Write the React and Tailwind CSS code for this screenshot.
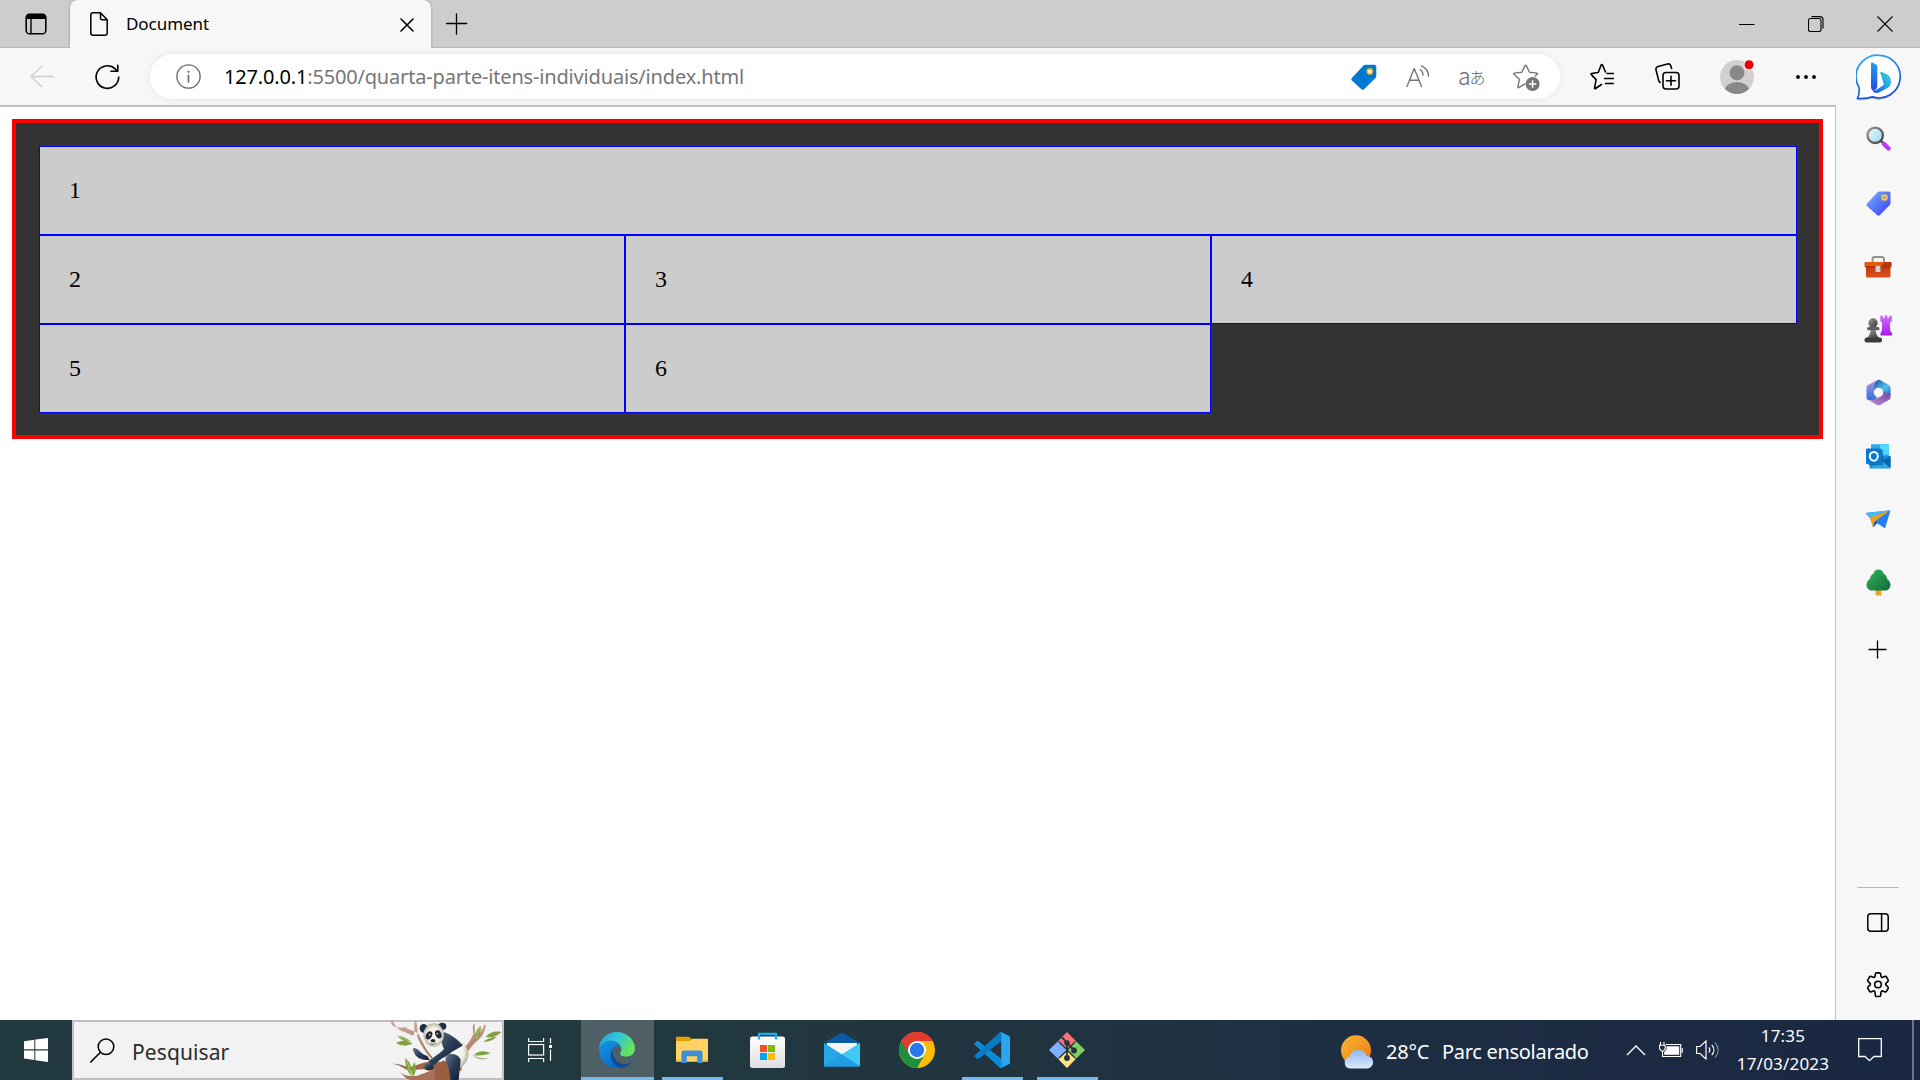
import React from "react";

const stroke = { fill: "none", stroke: "currentColor", strokeLinecap: "round", strokeLinejoin: "round" };

/* ---------- Tab strip ---------- */

function TabStrip() {
  return (
    <div className="flex h-12 shrink-0 bg-[#cdcdcd] text-black">
      <div className="flex w-[70px] items-center border-b border-[#b9b9b9] pl-[25px]">
        <svg className="h-[22px] w-[22px]" viewBox="0 0 22 22">
          <rect x="1.2" y="1.2" width="19.6" height="19.6" rx="3.4" {...stroke} strokeWidth="1.6" />
          <path d="M1 6V4.500A3.500 3.500 0 0 1 4.500 1h13A3.500 3.500 0 0 1 21 4.500V6z" fill="#000" />
          <path d="M6 6v14.500" {...stroke} strokeWidth="1.400" />
        </svg>
      </div>
      <div className="flex w-[361px] items-center rounded-t-lg bg-[#f7f7f7] pl-5 shadow-[0_0_3px_rgba(0,0,0,0.28)] [clip-path:inset(-3px_-3px_0_-3px)]">
        <svg className="h-6 w-[18px]" viewBox="0 0 18 24">
          <path d="M3 .8h7.500l6.700 7V21a2.200 2.200 0 0 1-2.200 2.200H3A2.200 2.200 0 0 1 .8 21V3A2.200 2.200 0 0 1 3 .8z M10.500 1v5.200a1.600 1.600 0 0 0 1.600 1.600h5" {...stroke} strokeWidth="1.500" />
        </svg>
        <span className="ml-[18px] w-[90px] whitespace-nowrap text-[17px] leading-6 tracking-[-0.05px]">Document</span>
        <svg className="ml-[184px] mt-[2px] h-[14px] w-[14px]" viewBox="0 0 14 14">
          <path d="M1 1l12 12M13 1L1 13" {...stroke} strokeWidth="1.600" />
        </svg>
      </div>
      <div className="flex flex-1 items-center border-b border-[#b9b9b9]">
        <svg className="ml-[15px] h-[22px] w-[22px]" viewBox="0 0 22 22">
          <path d="M10.500 .8v20.400M.3 10.500h20.400" {...stroke} strokeWidth="1.300" />
        </svg>
        <svg className="ml-auto h-4 w-4" viewBox="0 0 16 16">
          <path d="M0 8.500h15.500" stroke="#000" />
        </svg>
        <svg className="ml-[53px] h-4 w-4" viewBox="0 0 16 16" fill="none" stroke="#000" strokeWidth="1.100">
          <rect x="0.500" y="2.500" width="12.500" height="13" rx="2" />
          <path d="M3.500 .6h8.500a3 3 0 0 1 3 3v9" />
        </svg>
        <svg className="ml-[53px] mr-[27px] h-4 w-4" viewBox="0 0 16 16">
          <path d="M.5.500l15 15M15.500.500l-15 15" stroke="#000" strokeWidth="1.100" />
        </svg>
      </div>
    </div>
  );
}

/* ---------- Toolbar ---------- */

function BingLogo() {
  return (
    <svg className="h-[48px] w-[46px]" viewBox="0 0 46 48">
      <defs>
        <linearGradient id="bingRing" x1="0" y1="0" x2=".4" y2="1">
          <stop offset="0" stopColor="#24b9f2" /><stop offset=".5" stopColor="#1d80e0" /><stop offset="1" stopColor="#1c4fd8" />
        </linearGradient>
        <linearGradient id="bingB" x1="0" y1="0" x2="0" y2="1">
          <stop offset="0" stopColor="#2a9cf4" /><stop offset="1" stopColor="#1b52df" />
        </linearGradient>
        <linearGradient id="bingC" x1="0" y1="1" x2="1" y2="0">
          <stop offset="0" stopColor="#2352dd" /><stop offset=".5" stopColor="#219be8" /><stop offset="1" stopColor="#3ce0d0" />
        </linearGradient>
      </defs>
      <path d="M23 1.800a21.300 21.300 0 1 1-7.500 41.500c-4 1.200-8.500 1.700-13.500 1.700 1.600-3.500 2-7 1.500-11A21.300 21.300 0 0 1 23 1.800z" fill="#0003" transform="translate(0 1.500)" />
      <path d="M23 1.300a21.300 21.300 0 1 1-6.500 41.600c-4.500 1.400-9.500 1.800-15 1.600 1.800-3.500 2-7 1.500-11A21.300 21.300 0 0 1 23 1.300z" fill="#fff" stroke="url(#bingRing)" strokeWidth="1.700" />
      <path d="M15 9.500c0-1 .7-1.300 1.500-.9l3.500 2c1 .6 1.300 1.300 1.300 2.500v19c0 2-1 3.500-3 4.300-2.200.3-3.300-1.500-3.300-3.500z" fill="url(#bingB)" />
      <path d="M24.500 19.500c-.4-1.300.2-2 1.500-1.500l4.500 2c3 1.400 4.500 4 4.500 7.500 0 3-1 5-3.500 6.500l-8 4.300c-3 1.300-6 .6-7.500-2 2 .7 3.500.2 5.300-1l6.500-4.500-1.300-5z" fill="url(#bingC)" />
    </svg>
  );
}

function Toolbar() {
  return (
    <div className="flex h-[57px] shrink-0 items-center bg-[#f7f7f7]">
      <svg className="ml-[30px] h-[22px] w-6 text-[#cecece]" viewBox="0 0 24 22">
        <path d="M23.500 10.500H1M11.500 .5L1 10.500l10.500 10" {...stroke} strokeWidth="1.400" />
      </svg>
      <svg className="ml-[41px] h-[26px] w-[25px] text-black" viewBox="0 0 25 26">
        <path d="M23.700 13a11.300 11.300 0 1 1-3.600-8.200l2.400 2.300M22.800 1.300v6H16" {...stroke} strokeWidth="1.600" />
      </svg>
      <div className="ml-[30px] flex h-[45px] w-[1410px] items-center rounded-full bg-white shadow-[0_0_8px_rgba(0,0,0,0.07)]">
        <svg className="ml-[26px] h-[25px] w-[25px] text-[#707070]" viewBox="0 0 25 25">
          <circle cx="12.500" cy="12.500" r="11.600" {...stroke} strokeWidth="1.400" />
          <path d="M12.500 11.300v6.500" {...stroke} strokeWidth="1.700" /><circle cx="12.500" cy="7.800" r="1.150" fill="currentColor" />
        </svg>
        <span className="ml-[23px] w-[560px] whitespace-nowrap text-[20px] leading-7 tracking-[-0.17px] text-[#767676]">
          <span className="text-black">127.0.0.1</span>:5500/quarta-parte-itens-individuais/index.html
        </span>
        <svg className="ml-[567px] h-[26px] w-[26px]" viewBox="0 0 26 26">
          <path d="M14 .8h9.500A1.800 1.800 0 0 1 25.300 2.600V12c0 .8-.3 1.500-.8 2L13 25.200c-.8.8-1.800.8-2.600 0L.9 16.600c-.8-.8-.8-1.800 0-2.600L12.500 1.500c.4-.5.900-.7 1.500-.7z" fill="#0078d4" />
          <circle cx="18.800" cy="7.500" r="2.600" fill="#fff" stroke="#e9b61b" strokeWidth="1.600" />
        </svg>
        <svg className="ml-[29px] h-6 w-6 text-[#767676]" viewBox="0 0 24 24">
          <path d="M1 21.500L8.200 3.500l7.300 18M3.600 15.300h9.300M14.300 4.500c1.600 1.200 2.600 3 2.700 5.500M15.500 .8c4.500 2.100 7 5.100 7 10.200" {...stroke} strokeWidth="1.400" />
        </svg>
        <span className="ml-7 flex w-[28px] items-center whitespace-nowrap font-['Noto_Sans_CJK_JP',sans-serif] text-[23px] font-light leading-7 tracking-[-1px] text-[#666]">
          <span className="-mt-[3px]">a</span><span className="text-[16px]">あ</span>
        </span>
        <svg className="ml-[27px] mt-[2px] h-7 w-[27px] text-[#767676]" viewBox="0 0 27 28">
          <path d="M12 19.800l-6.200 3.800c-.6.300-1-.1-.9-.8l1.500-7.600-5.400-5c-.5-.5-.3-1 .4-1.100l7.400-.9L12 1.600c.4-.7 1-.7 1.300 0l3.200 6.600 7.300.9c.8.100 1 .6.400 1.100l-2 1.900" {...stroke} strokeWidth="1.400" />
          <circle cx="19.600" cy="20" r="7" fill="currentColor" /><path d="M19.600 16.300v7.400M15.900 20h7.400" stroke="#fff" strokeWidth="1.500" />
        </svg>
      </div>
      <svg className="ml-[30px] h-7 w-6 text-black" viewBox="0 0 24 28">
        <path d="M11.500 21.500l-6 4c-.6.400-1 0-.9-.7l1.500-8.200-4.800-5c-.5-.5-.3-1 .4-1.100l6.500-1L11.200 2c.4-.7 1-.7 1.300 0l3 7M17 10.500h6.300M14.500 15.500h8.800M15.500 20.500h7.800" {...stroke} strokeWidth="1.600" />
      </svg>
      <svg className="ml-[41px] h-7 w-[25px] text-black" viewBox="0 0 25 28">
        <rect x="8" y="9.500" width="16" height="16.500" rx="3" {...stroke} strokeWidth="1.600" />
        <path d="M16 13.300v9M11.500 17.800h9M5 19.500c-.9-.7-1.200-1.700-1.500-2.800L1 6.900c-.4-1.600.4-2.900 2-3.400l9.500-2.500c1.500-.4 2.700.3 3.300 1.800l.8 2.700" {...stroke} strokeWidth="1.600" />
      </svg>
      <svg className="ml-[40px] h-[35px] w-[35px]" viewBox="0 0 35 35">
        <clipPath id="avatar"><circle cx="17" cy="18" r="17" /></clipPath>
        <circle cx="17" cy="18" r="17" fill="#d2d0ce" />
        <g fill="#8a8886" clipPath="url(#avatar)"><circle cx="17" cy="13.700" r="7.500" /><ellipse cx="17" cy="32" rx="12.500" ry="9" /></g>
        <circle cx="29" cy="5.800" r="5.500" fill="#f7f7f7" /><circle cx="29" cy="5.800" r="4.500" fill="#e80000" />
      </svg>
      <svg className="ml-[41px] h-6 w-5" viewBox="0 0 20 24">
        <circle cx="2" cy="12" r="1.900" /><circle cx="10" cy="12" r="1.900" /><circle cx="18" cy="12" r="1.900" />
      </svg>
    </div>
  );
}

/* ---------- Sidebar ---------- */

function Sidebar() {
  return (
    <aside className="flex w-[84px] shrink-0 flex-col items-center bg-[#f7f7f7] text-black">
      <div className="ml-[2px] mt-[6px]"><BingLogo /></div>
      <svg className="mt-[24px] h-[25px] w-[25px]" viewBox="0 0 25 25">
        <defs>
          <linearGradient id="lens" x1="0" y1="0" x2="1" y2="1"><stop stopColor="#eefaff" /><stop offset="1" stopColor="#9bd6f6" /></linearGradient>
          <linearGradient id="rim" x1="0" y1="0" x2="1" y2="1"><stop stopColor="#999" /><stop offset="1" stopColor="#3d3d3d" /></linearGradient>
        </defs>
        <path d="M14 14l4 4" stroke="#555" strokeWidth="2.500" />
        <circle cx="9.200" cy="9.300" r="7.700" fill="url(#lens)" stroke="url(#rim)" strokeWidth="2.300" />
        <path d="M18 18l4.500 4.500" stroke="#b838f5" strokeWidth="4.400" strokeLinecap="round" />
      </svg>
      <svg className="mt-[40px] h-[25px] w-[25px]" viewBox="0 0 25 25">
        <linearGradient id="tag" x1="0" y1="0" x2="1" y2="1"><stop stopColor="#77b9fa" /><stop offset="1" stopColor="#3837fa" /></linearGradient>
        <path d="M13 .6h9.500a2 2 0 0 1 2 2V12c0 1-.3 1.600-.9 2.200L14 24c-1 .9-2 .9-3 0L1.200 15.300c-.9-.9-.9-2 0-3L11.300 1.500c.5-.6 1-.9 1.700-.9z" fill="url(#tag)" />
        <circle cx="18.500" cy="6.500" r="2.400" fill="#a98fe0" stroke="#ffd21e" strokeWidth="1.700" />
      </svg>
      <svg className="mt-[40px] h-[22px] w-7" viewBox="0 0 28 22">
        <linearGradient id="box" x1="0" y1="0" x2="0" y2="1"><stop stopColor="#bd3a12" /><stop offset="1" stopColor="#dd4d1c" /></linearGradient>
        <path d="M8.500 7V3.200A2.200 2.200 0 0 1 10.700 1h7a2.200 2.200 0 0 1 2.200 2.200V7" fill="none" stroke="#929292" strokeWidth="2" />
        <rect x="2" y="9" width="24.500" height="12.500" rx="1.500" fill="url(#box)" />
        <path d="M1.500 6h25.300c.5 0 .8.300.8.800V9.500c0 1.500-1 2.500-2.500 2.500h-22C1.600 12 .6 11 .6 9.500V6.800c0-.5.400-.8.900-.8z" fill="#b2370c" />
        <path d="M1 6h20l-4 4H1z" fill="#e65b0a" /><rect x="11.500" y="10" width="5" height="6" rx=".8" fill="#d0d0d0" />
      </svg>
      <svg className="mt-[37px] h-7 w-7" viewBox="0 0 28 28">
        <defs>
          <linearGradient id="rook" x1="0" y1="0" x2="0" y2="1"><stop stopColor="#d071fb" /><stop offset="1" stopColor="#a817f3" /></linearGradient>
          <linearGradient id="pawn" x1="0" y1="0" x2="1" y2="1"><stop stopColor="#999" /><stop offset="1" stopColor="#393939" /></linearGradient>
        </defs>
        <path d="M16.300.8h2.600v2h2V.3h2.400v2.500h2V.8h2.600V6l-2 2 .4 8 1.700 2v2.500H16.500V18l1.300-2 .4-8-1.900-2z" fill="url(#rook)" />
        <circle cx="9" cy="8" r="4.700" fill="url(#pawn)" /><rect x="3" y="12" width="12.500" height="3.300" rx="1.500" fill="#626262" />
        <path d="M6.500 15h5.200c.1 3 .9 5.500 3.300 8H3c2.500-2.500 3.400-5 3.500-8z" fill="url(#pawn)" />
        <rect x=".5" y="22.500" width="17.500" height="5" rx="2.300" fill="#3c3c3c" />
      </svg>
      <svg className="mt-[36px] h-[27px] w-[25px]" viewBox="0 0 25 27">
        <defs>
          <linearGradient id="m1" x1="0" y1="0" x2="0" y2="1"><stop stopColor="#bd8de5" /><stop offset="1" stopColor="#2676da" /></linearGradient>
          <linearGradient id="m2" x1="0" y1="0" x2="1" y2="1"><stop stopColor="#154f94" /><stop offset=".6" stopColor="#4dc5f2" /><stop offset="1" stopColor="#1b5dad" /></linearGradient>
          <linearGradient id="m3" x1="0" y1="1" x2="1" y2="0"><stop stopColor="#c28ee0" /><stop offset="1" stopColor="#72449c" /></linearGradient>
        </defs>
        <path d="M11 1L2.200 6C1 6.700.5 7.500.5 8.800v9.400c0 1.300.5 2.200 1.700 2.800l8.300.5V1.500z" fill="url(#m1)" />
        <path d="M12.500.5C9.500 2.500 8 4.500 8 8.500v2l4.500-1.500 7 7 5 .5V8.800c0-1.300-.6-2.200-1.700-2.800L14 1c-.5-.3-1-.5-1.500-.5z" fill="url(#m2)" />
        <path d="M2.200 21c3 .8 5.500 0 8-1.500l6.300-3.500 1-4L22 15.200c1.500.8 2.500 0 2.500-1.500v4.500c0 1.300-.6 2.200-1.700 2.800L14 26c-1 .6-2 .6-3 0z" fill="url(#m3)" />
        <circle cx="12.500" cy="13.500" r="4.700" fill="#f7f7f7" />
      </svg>
      <svg className="mt-[38px] h-[25px] w-[25px]" viewBox="0 0 25 25">
        <path d="M5 1.500C5 .8 5.500.300 6.200.300h15.600c.7 0 1.200.5 1.200 1.200V15H5z" fill="#32a9e7" /><path d="M14 .5h9v10h-9z" fill="#50d9ff" />
        <path d="M3.500 12l21 0v11.300c0 .8-.6 1.300-1.300 1.300H4.800c-.7 0-1.300-.6-1.300-1.300z" fill="#168bd4" />
        <path d="M24.500 12v12L16 17z" fill="#0a65af" /><path d="M4 24l12-7 8.500 7z" fill="#28a8ea" />
        <rect x="2" y="5.500" width="15" height="15.500" rx="1" fill="#0b5197" opacity=".6" /><rect y="4.500" width="15.500" height="15.500" rx="1.300" fill="#0879d5" />
        <ellipse cx="7.800" cy="12.300" rx="4" ry="4.400" fill="none" stroke="#fff" strokeWidth="2" />
      </svg>
      <svg className="mt-[41px] h-[19px] w-[26px]" viewBox="0 0 26 19">
        <path d="M.5 3L25.500.3 20 18.500l-8.500-5.700-3.300 4.500L5 8z" fill="#277ef0" /><path d="M.5 3L25.500.3 5.500 8z" fill="#46b8f4" />
        <path d="M5 7.500L25 .5 9.500 11.500 8 17.300z" fill="#efa018" /><path d="M8.500 17.300l1.500-6 2.300 1.800z" fill="#1c4bb8" />
      </svg>
      <svg className="mt-[40px] h-[27px] w-[25px]" viewBox="0 0 25 27">
        <linearGradient id="tree" x1="0" y1="0" x2="1" y2="1"><stop stopColor="#36b45c" /><stop offset="1" stopColor="#12693b" /></linearGradient>
        <rect x="9.500" y="19" width="6" height="7.500" rx="1" fill="#f5a11d" />
        <path d="M12.500.5C15 .5 17 2 17.500 4.500c2 1 3.500 3 3.500 5.500 2 1.200 3.500 3.500 3.500 6 0 3.500-2.500 5.500-6 5.500h-12c-3.500 0-6-2-6-5.500 0-2.500 1.300-4.800 3.500-6 0-2.500 1.500-4.500 3.500-5.500C8 2 10 .5 12.500.5z" fill="url(#tree)" />
      </svg>
      <svg className="mr-[2px] mt-[44px] h-[19px] w-[19px]" viewBox="0 0 19 19"><path d="M9.500.500v18M.5 9.500h18" stroke="#000" strokeWidth="1.300" /></svg>
      <div className="mt-auto h-px w-[42px] bg-[#b8b8b8]" />
      <svg className="mt-[25px] h-[19px] w-[22px]" viewBox="0 0 22 19">
        <rect x=".8" y=".8" width="20.400" height="17.400" rx="3" {...stroke} strokeWidth="1.500" /><path d="M14.600 1v17" stroke="#000" strokeWidth="1.500" />
      </svg>
      <svg className="mb-[22px] mt-[40px] h-[26px] w-[26px]" viewBox="0 0 26 26">
        <path d="M10.300 2.300c0-.7.500-1.300 1.200-1.400h3c.7.100 1.200.7 1.200 1.400l.3 2c.1.800.9 1.300 1.700 1l2-.8c.8-.3 1.500 0 1.900.7l1.500 2.600c.4.700.200 1.400-.400 1.900l-1.600 1.400c-.700.5-.700 1.500 0 2.100l1.600 1.400c.6.500.8 1.200.4 1.900l-1.500 2.600c-.4.700-1.100 1-1.900.7l-2-.8c-.8-.3-1.600.2-1.700 1l-.3 3c0 .8-.5 1.500-1.200 1.500h-3c-.7 0-1.200-.7-1.200-1.500l-.3-3c-.1-.8-.9-1.300-1.700-1l-2 .8c-.8.3-1.500 0-1.900-.7l-1.500-2.600c-.4-.7-.2-1.400.4-1.900l1.600-1.400c.7-.6.7-1.600 0-2.100L3.300 9.700c-.6-.5-.8-1.200-.4-1.900l1.500-2.600c.4-.7 1.100-1 1.900-.7l2 .8c.8.3 1.600-.2 1.700-1z" {...stroke} strokeWidth="1.600" />
        <circle cx="13" cy="12.500" r="3.300" {...stroke} strokeWidth="1.600" />
      </svg>
    </aside>
  );
}

/* ---------- Page content ---------- */

const items = ["1", "2", "3", "4", "5", "6"];

function GridPage() {
  return (
    <main className="min-w-0 flex-1 border-r border-t-2 border-[#bfbfbf] bg-white p-3">
      <div className="grid grid-cols-3 border-4 border-[#ff0000] bg-[#333] pb-[22px] pl-[23px] pr-[22px] pt-[23px]">
        {items.map((n) => (
          <div
            key={n}
            className="h-[89px] border border-[#0000ff] bg-[#ccc] py-[30px] pl-[29px] font-['Liberation_Serif',serif] text-2xl leading-[27px] text-black first:col-span-3"
          >
            {n}
          </div>
        ))}
      </div>
    </main>
  );
}

/* ---------- Taskbar ---------- */

function Panda() {
  return (
    <svg className="absolute -bottom-[2px] -right-[2px] h-[60px] w-[114px]" viewBox="28 15 342 180">
      <defs>
        <linearGradient id="bark" x1="0" y1="0" x2="0" y2="1"><stop stopColor="#cfaaa0" /><stop offset="1" stopColor="#98603f" /></linearGradient>
        <linearGradient id="navy" x1="0" y1="0" x2="1" y2="1"><stop stopColor="#61768e" /><stop offset=".5" stopColor="#293c55" /><stop offset="1" stopColor="#131d30" /></linearGradient>
        <radialGradient id="fur"><stop stopColor="#ffffff" /><stop offset=".65" stopColor="#eeeee2" /><stop offset="1" stopColor="#b8b5a0" /></radialGradient>
      </defs>
      <path d="M30 15h9c3 18 13 27 27 34 12 4 20 6 27 12l8-1c3-15-1-30 2-45h5c1 15 6 33 2 50 14 30 28 49 46 69l45 12c16-14 29-27 40-40 18-12 30-30 38-50-1-10-4-19 0-29l5-1c-1 14-1 25 3 34 12-6 20-16 24-31h6c-3 22-13 39-28 50-16 14-28 32-43 57l-3 31h-100c-20-9-35-1-54 0-17-3-33-20-52-20 20-3 33 9 53 9 15-3 27-10 45-14 9 0 11-8 22-14-13-15-27-37-42-70-11-12-27-11-40-22C38 42 32 30 30 15z" fill="url(#bark)" transform="translate(-1 0)" />
      <path d="M55 170c18 14 34 14 55 12l44-16 40 10-20 19H90c-16-3-23-17-35-25z" fill="#a87058" />
      <g fill="#7fa23e">
        <path d="M50 62c15 1 29 7 41 17-15 3-30-3-41-17zM46 83c17-8 33-7 50 3-20 7-36 8-50-3z" />
        <path d="M74 129c16 12 22 33 18 55-13-16-19-33-18-55zM101 141c7 14 6 30-4 45-5-14-4-30 4-45z" />
        <path d="M300 32c2 18-3 33-15 43-3-17 1-32 15-43zM362 51c-14 15-30 19-47 14 12-12 28-18 47-14zM348 66c-11 10-24 15-40 14 11-9 25-14 40-14zM280 121c12-15 32-16 50-6-17 6-34 8-50 6zM273 118c15 11 31 15 49 10-15 8-31 7-49-10z" />
      </g>
      <path d="M50 62l40 18M76 130l16 52M298 35l-12 37" stroke="#c3d69a" strokeWidth="2" fill="none" />
      <path d="M98 99c16-1 20 18 42 24l7 11c-20 4-48-4-50-35z" fill="url(#navy)" />
      <path d="M188 60c31 4 58 15 71 39 13 26-6 56-25 60-18 3-39-9-43-37z" fill="url(#fur)" />
      <path d="M189 51c25 8 45 26 57 40-11 10-28 14-40 27-16 9-29 15-42 30-10 8-20 0-17-10 13-15 33-23 43-37-6-11-13-31-1-50z" fill="url(#navy)" />
      <ellipse cx="145" cy="155" rx="14" ry="10" fill="url(#navy)" />
      <path d="M199 121c20-10 35 0 41 13l-6 61h-27c-7-20-20-51-8-74z" fill="url(#navy)" />
      <ellipse cx="129" cy="40" rx="12" ry="13" fill="#1f2d43" /><ellipse cx="185" cy="34" rx="12" ry="11" fill="#1f2d43" />
      <ellipse cx="159" cy="60" rx="31" ry="35" fill="url(#fur)" />
      <ellipse cx="145" cy="61" rx="9" ry="13" transform="rotate(28 145 61)" fill="#202a3c" /><ellipse cx="173" cy="58" rx="9" ry="13" transform="rotate(-25 173 58)" fill="#202a3c" />
      <circle cx="147" cy="59" r="3" fill="#d5aaa8" /><circle cx="170" cy="56" r="3" fill="#d5aaa8" />
      <ellipse cx="157" cy="77" rx="7" ry="5" fill="#222" /><path d="M149 86q9 6 17-3" fill="none" stroke="#333" strokeWidth="2" />
      <path d="M162 151l27-15c10 6 17 20 20 59h-47z" fill="#98603f" />
    </svg>
  );
}

function EdgeIcon() {
  return (
    <svg className="h-9 w-9" viewBox="0 0 36 36">
      <defs>
        <linearGradient id="e1" x1="0" y1="0" x2="1" y2=".5"><stop stopColor="#249dd8" /><stop offset=".5" stopColor="#30c6da" /><stop offset="1" stopColor="#65e45a" /></linearGradient>
        <linearGradient id="e2" x1="0" y1="0" x2=".6" y2="1"><stop stopColor="#1796dd" /><stop offset="1" stopColor="#0869cf" /></linearGradient>
      </defs>
      <path d="M13.500 16c-1.500 7 2 15 12 16.500 4 .3 6.500-2 8.500-4.500-3 5-9 8-14 8C11 35 7.500 23 13.500 16z" fill="#114a96" />
      <path d="M0 18C0 7 8 0 18 0s18 8 18 16c0 6-4 8.500-9 8.500-4 0-6-1.500-6-2.800 0-.8 1.300-1.500 1.300-4.200C22 12 17 9 11.500 9 5 9 1.500 13 0 18z" fill="url(#e1)" />
      <path d="M0 18c.7-6 6-9.500 11-9.500 6 0 10 3 11 6.500-1.500-.8-3-.8-4-.8-5 .5-7 6-5.800 11C13.500 31 18 35.500 24 35c-2 .7-4 1-6 1C8 36 0 28 0 18z" fill="url(#e2)" />
      <path d="M14.500 18c-2 6 .5 14 11 14.500 3.500.1 6-1.500 8.500-4.500-3 5-8 7.500-12.500 7.800C12.500 33 10.500 24 14.500 18z" fill="#114a96" />
    </svg>
  );
}

function FolderIcon() {
  return (
    <svg className="h-9 w-8" viewBox="0 0 32 36">
      <path d="M0 12V6c0-.7.5-1.200 1.200-1.200h11.500c.5 0 1 .2 1.300.6l1.600 2.200L14 12z" fill="#e2a100" />
      <path d="M0 9h14l2-2.300h14.800c.7 0 1.200.5 1.200 1.200V28.500c0 .7-.5 1.200-1.200 1.200H1.200C.5 29.700 0 29.200 0 28.500z" fill="#ffd263" />
      <path d="M5.500 31V20.500c0-1.200.8-2 2-2h17c1.200 0 2 .8 2 2V31h-5.300v-6.700H10.800V31z" fill="#3e8fd8" /><path d="M0 28h5.500v1.700H0zM26.500 28H32v1.700h-5.500z" fill="#e7b73b" />
    </svg>
  );
}

function StoreIcon() {
  return (
    <svg className="h-9 w-[35px]" viewBox="0 0 35 36">
      <linearGradient id="bag" x1="0" y1="0" x2="0" y2="1"><stop stopColor="#fff" /><stop offset="1" stopColor="#dedee0" /></linearGradient>
      <rect y="4.500" width="35" height="31.500" rx="2.500" fill="url(#bag)" />
      <path d="M9 7.500V1.800h17v5.700" fill="none" stroke="#16b0f0" strokeWidth="2.200" />
      <path fill="#f25022" d="M10 13h7v7h-7z" /><path fill="#7fba00" d="M18 13h7v7h-7z" /><path fill="#00a4ef" d="M10 21h7v7h-7z" /><path fill="#ffb900" d="M18 21h7v7h-7z" />
    </svg>
  );
}

function MailIcon() {
  return (
    <svg className="h-9 w-9" viewBox="0 0 36 36">
      <path d="M0 11L16.500 1.300c1-.6 2-.6 3 0L36 11v6H0z" fill="#0c59a4" /><path d="M3 11h30v6L18 27 3 17z" fill="#f4f4f5" />
      <path d="M0 11l18 11.500L36 11v22.500c0 .6-.4 1-1 1H1c-.6 0-1-.4-1-1z" fill="#26a7e5" /><path d="M36 11v23L18 22.500z" fill="#41cbf4" /><path d="M0 34L18 22.500 35 34.500H1z" fill="#219be1" />
    </svg>
  );
}

function ChromeIcon() {
  return (
    <svg className="h-9 w-9" viewBox="0 0 36 36">
      <circle cx="18" cy="18" r="18" fill="#fbbc0a" />
      <path d="M2.400 9A18 18 0 0 0 18 36l7.800-13.500L18 27l-7.800-4.500z" fill="#1f8e3f" />
      <path d="M2.400 9A18 18 0 0 1 33.600 9H18l-9 7.500 1.200 6z" fill="#e33b2e" /><path d="M2.400 9l7.800 13.500L18 26v-8z" fill="#1f8e3f" />
      <path d="M2.400 9A18 18 0 0 1 33.600 9H18a9 9 0 0 0-7.800 13.500z" fill="#e33b2e" />
      <circle cx="18" cy="18" r="9" fill="#fff" /><circle cx="18" cy="18" r="7.200" fill="#2a77ec" />
    </svg>
  );
}

function CodeIcon() {
  return (
    <svg className="h-9 w-9" viewBox="0 0 36 36">
      <path d="M.5 11.200L2.600 9.300c.6-.5 1.400-.5 2 0L27 26.500V36c-.8 0-1.300-.3-1.800-.8L.5 12.600c-.4-.4-.4-1 0-1.400z" fill="#0d8bd5" />
      <path d="M.5 24.800l2.100 1.900c.6.500 1.400.5 2 0L27 9.500V0c-.8 0-1.300.3-1.800.8L.5 23.400c-.4.4-.4 1 0 1.400z" fill="#087bc2" />
      <path d="M25.500 35.500c1 .5 1.700.5 2.500.100l6.800-3.300c.8-.4 1.200-1 1.200-1.900V5.600c0-.9-.4-1.500-1.200-1.900L28 .4c-.8-.4-1.500-.4-2.500.3 1-.4 1.700.3 1.700 1.600v31.400c0 1.300-.7 2.200-1.700 1.800z" fill="#2ba5ee" />
    </svg>
  );
}

function GitIcon() {
  return (
    <svg className="h-9 w-9" viewBox="0 0 36 36">
      <g strokeWidth="1.600" strokeLinejoin="round">
        <path d="M18 1l7.700 8L18 16.500 10.300 9z" fill="#fb7379" stroke="#fb7379" /><path d="M9 10.300L16.700 18 9 25.700 1 18z" fill="#80b1ff" stroke="#80b1ff" />
        <path d="M27 10.300L35 18l-8 7.700L19.300 18z" fill="#82cd61" stroke="#82cd61" /><path d="M18 19.500l7.700 7.500L18 35l-7.700-8z" fill="#ffe383" stroke="#ffe383" />
      </g>
      <path d="M10 10l8.500 8L10 26M26 10l-8 8 8 8" fill="none" stroke="#22343f" strokeWidth="1.300" />
      <path d="M13 5.500l5 5V26M18 11l7 7" fill="none" stroke="#22343f" strokeWidth="1.800" />
      <g fill="#22343f"><circle cx="18" cy="11" r="2.700" /><circle cx="18" cy="26" r="2.900" /><circle cx="25" cy="18.500" r="2.900" /></g>
    </svg>
  );
}

function Pinned({ children, running }) {
  return (
    <div className="flex w-[75px] flex-col items-center">
      <div className="mr-px flex h-[57px] items-center pt-[3px]">{children}</div>
      {running && <div className="h-[3px] w-[61px] bg-[#76b9ed]" />}
    </div>
  );
}

function Taskbar() {
  return (
    <footer className="flex h-[60px] shrink-0 bg-[linear-gradient(90deg,#22383f_0%,#22383f_38%,#203340_56%,#1c2c43_78%,#1a2742_100%)] text-white">
      <div className="flex w-[72px] items-center justify-center">
        <svg className="h-6 w-6" viewBox="0 0 24 24" fill="#fff"><path d="M0 3.200L10.300 1.800V11.300H0zM11.300 1.600L24 0v11.300H11.300zM0 12.400h10.300v9.600L0 20.600zM11.300 12.400H24V24l-12.700-1.800z" /></svg>
      </div>
      <div className="relative flex w-[432px] items-center border-2 border-[#c0bfc1] bg-[#f2f2f2]">
        <svg className="ml-4 h-[25px] w-[25px] text-black" viewBox="0 0 25 25">
          <circle cx="16" cy="8.700" r="7.800" {...stroke} strokeWidth="1.500" /><path d="M10.500 14.200L.8 24" {...stroke} strokeWidth="1.600" />
        </svg>
        <span className="ml-[17px] mt-1 text-[21px] leading-7 tracking-[0.1px] text-[#2b2b2b]">Pesquisar</span>
        <Panda />
      </div>
      <div className="flex w-[77px] items-center pl-6">
        <svg className="h-6 w-[25px]" viewBox="0 0 25 24" fill="none" stroke="#fff" strokeWidth="1.200">
          <path d="M.6 0v3.500h15V0M.6 24v-3.500h15V24M22.500 0v5.500M22.500 11.500V23" /><rect x=".6" y="6.500" width="15" height="10.500" /><path d="M21 7h3v3h-3z" fill="#fff" stroke="none" />
        </svg>
      </div>
      <div className="mr-px flex w-[73px] flex-col items-center bg-[#4e6066]">
        <div className="mr-[2px] flex h-[57px] items-center pt-[3px]"><EdgeIcon /></div>
        <div className="h-[3px] w-full bg-[#76b9ed]" />
      </div>
      <Pinned running><FolderIcon /></Pinned>
      <Pinned><StoreIcon /></Pinned>
      <Pinned><MailIcon /></Pinned>
      <Pinned><ChromeIcon /></Pinned>
      <Pinned running><CodeIcon /></Pinned>
      <Pinned running><GitIcon /></Pinned>
      <div className="ml-[236px] flex items-center">
        <svg className="mt-[3px] h-[34px] w-[33px]" viewBox="0 0 33 34">
          <defs>
            <linearGradient id="sun" x1="0" y1="0" x2="1" y2="1"><stop stopColor="#f6b82b" /><stop offset="1" stopColor="#f2741c" /></linearGradient>
            <linearGradient id="cloud" x1="0" y1="0" x2="0" y2="1"><stop stopColor="#8eb8f5" /><stop offset="1" stopColor="#dce9fb" /></linearGradient>
          </defs>
          <circle cx="15" cy="15.300" r="15" fill="url(#sun)" />
          <path d="M9 33.500a5.800 5.800 0 0 1-.5-11.500 9 9 0 0 1 17.300-1A6.300 6.300 0 0 1 27 33.500z" fill="url(#cloud)" />
        </svg>
        <span className="ml-3 mt-[3px] w-[56px] whitespace-nowrap text-[20px] leading-7 tracking-[-0.2px]">28°C</span>
        <span className="mt-[3px] w-[161px] whitespace-nowrap text-[20px] leading-7 tracking-[-0.3px]">Parc ensolarado</span>
      </div>
      <div className="ml-[23px] flex items-center">
        <svg className="h-[11px] w-[20px]" viewBox="0 0 20 11"><path d="M1 10L10 1l9 9" fill="none" stroke="#fff" strokeWidth="1.400" /></svg>
        <svg className="ml-[13px] h-[17px] w-[24px]" viewBox="0 0 24 17" fill="none" stroke="#fff" strokeWidth="1.100">
          <path d="M7 2.500h14.700v12H3.500V9M23.200 6v5M1.500 0v3M5 0v3M.5 3.200h5.700v3.500L4.500 9h-2L.5 6.700z" /><path d="M7.500 4.200h12.700v8.600H5.200V10l2.300-2.500z" fill="#fff" stroke="none" />
        </svg>
        <svg className="ml-[13px] h-5 w-[24px]" viewBox="0 0 24 20" fill="none" stroke="#fff" strokeWidth="1.200">
          <path d="M.6 6.500h3.500L10 1v18l-5.900-5.500H.6zM12.800 7.500c1.300 1.500 1.300 3.500 0 5M15.800 5c2.800 3 2.800 7 0 10" /><path d="M19 2.500c4.200 4.500 4.200 10.500 0 15" opacity=".45" />
        </svg>
      </div>
      <div className="ml-[15px] flex w-[96px] flex-col items-center pt-[2px] text-[17px] leading-[28px] tracking-[0.2px]">
        <span className="whitespace-nowrap">17:35</span>
        <span className="whitespace-nowrap">17/03/2023</span>
      </div>
      <svg className="ml-[27px] mt-[18px] h-6 w-6" viewBox="0 0 24 24"><path d="M.7.700h22.600v17.800h-7.300l-4.500 4.200-4.500-4.200H.700z" fill="none" stroke="#fff" strokeWidth="1.300" /></svg>
      <div className="ml-auto mr-[6px] w-[2px] bg-[#6d7588]" />
    </footer>
  );
}

export default function App() {
  return (
    <div className="flex h-[1080px] w-[1920px] flex-col overflow-hidden bg-white font-['Noto_Sans','Open_Sans',sans-serif]">
      <TabStrip />
      <div className="flex min-h-0 flex-1">
        <div className="flex min-w-0 flex-1 flex-col bg-[#f7f7f7]">
          <Toolbar />
          <div className="flex min-h-0 flex-1"><GridPage /></div>
        </div>
        <Sidebar />
      </div>
      <Taskbar />
    </div>
  );
}
